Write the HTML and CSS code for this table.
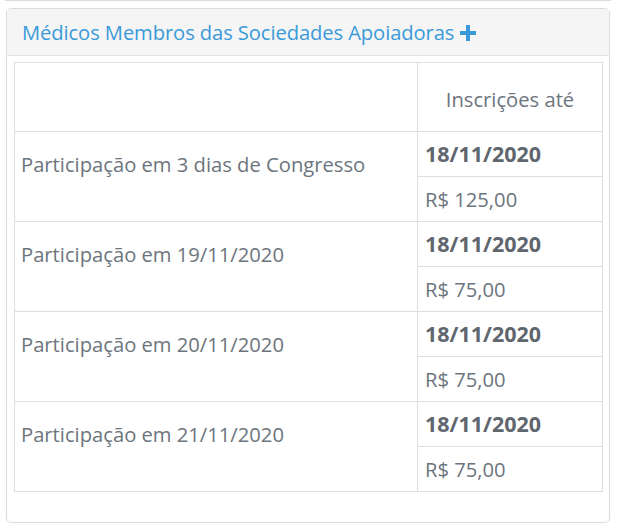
FILE: index.html
```html
<!DOCTYPE html>
<html lang="pt-BR">
<head>
<meta charset="utf-8">
<title>Inscrições</title>
<link rel="stylesheet" href="styles.css">
</head>
<body>
<div class="prev-card"></div>
<div class="card">
  <div class="card-header">
    <span class="title">Médicos Membros das Sociedades Apoiadoras</span>
    <svg class="plus" width="16" height="16" viewBox="0 0 16 16" aria-hidden="true"><path d="M6 0h4v6h6v4h-6v6h-4v-6h-6v-4h6z" fill="#3a9ad9"/></svg>
  </div>
  <div class="card-body">
    <table class="prices">
      <thead>
        <tr><th class="empty"></th><th class="head">Inscrições até</th></tr>
      </thead>
      <tbody>
        <tr><td class="item" rowspan="2">Participação em 3 dias de Congresso</td><td class="date">18/11/2020</td></tr>
        <tr><td class="price">R$ 125,00</td></tr>
        <tr><td class="item" rowspan="2">Participação em 19/11/2020</td><td class="date">18/11/2020</td></tr>
        <tr><td class="price">R$ 75,00</td></tr>
        <tr><td class="item" rowspan="2">Participação em 20/11/2020</td><td class="date">18/11/2020</td></tr>
        <tr><td class="price">R$ 75,00</td></tr>
        <tr><td class="item" rowspan="2">Participação em 21/11/2020</td><td class="date">18/11/2020</td></tr>
        <tr><td class="price">R$ 75,00</td></tr>
      </tbody>
    </table>
  </div>
</div>
</body>
</html>
```
FILE: styles.css
```css
html, body {
  margin: 0;
  padding: 0;
  background: #fff;
}
body {
  font-family: "Open Sans", "Noto Sans", sans-serif;
  color: #6c757d;
  padding: 0 11px 0 6px;
}
.prev-card {
  height: 8px;
  margin-top: -8px;
  margin-left: -3px;
  margin-right: -3px;
  border: 1px solid #dcdcdc;
  border-top: none;
  border-radius: 0 0 4px 4px;
}
.card {
  margin-top: 7px;
  border: 1px solid #dcdcdc;
  border-radius: 5px;
  overflow: hidden;
}
.card-header {
  background: #f5f5f5;
  height: 47px;
  border-bottom: 1px solid #e3e3e3;
  display: flex;
  align-items: center;
  padding-left: 15px;
  box-sizing: border-box;
}
.title {
  color: #3a9ad9;
  font-size: 20.2px;
  letter-spacing: -0.1px;
}
.plus {
  margin-left: 6px;
  margin-top: 1px;
}
.card-body {
  padding: 6px 6px 30px 7px;
}
.prices {
  width: 100%;
  border-collapse: collapse;
  border: 1px solid #dedede;
}
.prices th, .prices td {
  border: 1px solid #dedede;
  padding: 0 7px;
  font-size: 20.2px;
  text-align: left;
}
.prices th.empty {
  width: 388px;
}
.prices th.head {
  height: 65px;
  font-weight: normal;
  text-align: center;
  padding-top: 3px;
}
.prices td.date, .prices td.price {
  height: 45px;
  box-sizing: border-box;
}
.prices td.date {
  font-weight: bold;
  font-size: 21.5px;
  color: #5f666e;
  padding-top: 0;
  padding-bottom: 2px;
}
.prices td.price {
  padding-top: 0;
}
.prices td.item {
  vertical-align: middle;
  padding-left: 6px;
  padding-bottom: 26px;
}
```
